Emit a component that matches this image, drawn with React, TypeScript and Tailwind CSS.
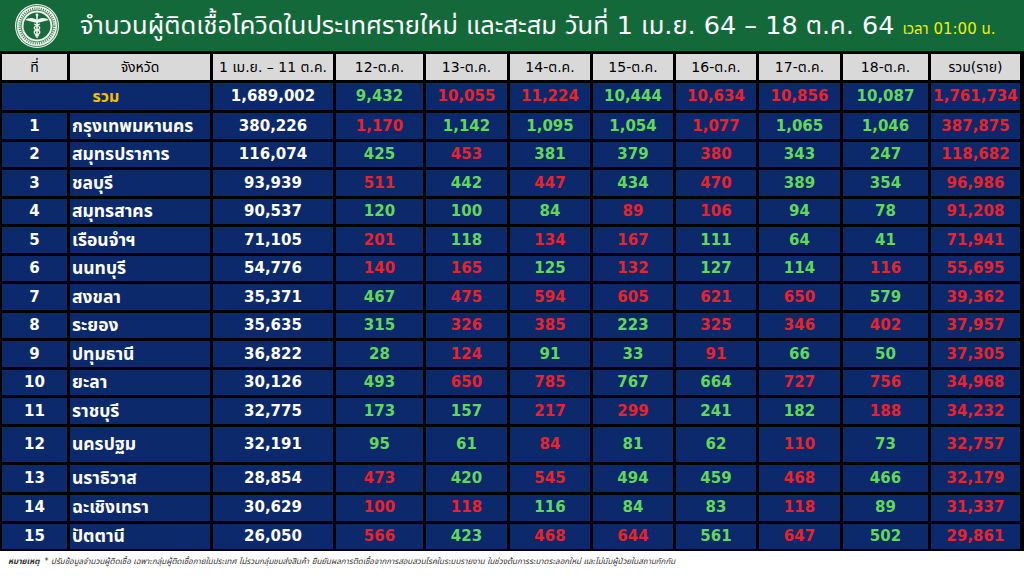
import React from 'react'

type Tone = 'g' | 'r'
type Row = {
  no: number
  name: string
  base: string
  days: [string, Tone][]
  total: string
}

const DATES = ['12-ต.ค.', '13-ต.ค.', '14-ต.ค.', '15-ต.ค.', '16-ต.ค.', '17-ต.ค.', '18-ต.ค.']

const d = (s: string): [string, Tone][] =>
  s.split(' ').map((p) => {
    const [v, t] = p.split(':')
    return [v, t as Tone]
  })

const SUM_DAYS = d('9,432:g 10,055:r 11,224:r 10,444:g 10,634:r 10,856:r 10,087:g')

const ROWS: Row[] = [
  { no: 1, name: 'กรุงเทพมหานคร', base: '380,226', days: d('1,170:r 1,142:g 1,095:g 1,054:g 1,077:r 1,065:g 1,046:g'), total: '387,875' },
  { no: 2, name: 'สมุทรปราการ', base: '116,074', days: d('425:g 453:r 381:g 379:g 380:r 343:g 247:g'), total: '118,682' },
  { no: 3, name: 'ชลบุรี', base: '93,939', days: d('511:r 442:g 447:r 434:g 470:r 389:g 354:g'), total: '96,986' },
  { no: 4, name: 'สมุทรสาคร', base: '90,537', days: d('120:g 100:g 84:g 89:r 106:r 94:g 78:g'), total: '91,208' },
  { no: 5, name: 'เรือนจำฯ', base: '71,105', days: d('201:r 118:g 134:r 167:r 111:g 64:g 41:g'), total: '71,941' },
  { no: 6, name: 'นนทบุรี', base: '54,776', days: d('140:r 165:r 125:g 132:r 127:g 114:g 116:r'), total: '55,695' },
  { no: 7, name: 'สงขลา', base: '35,371', days: d('467:g 475:r 594:r 605:r 621:r 650:r 579:g'), total: '39,362' },
  { no: 8, name: 'ระยอง', base: '35,635', days: d('315:g 326:r 385:r 223:g 325:r 346:r 402:r'), total: '37,957' },
  { no: 9, name: 'ปทุมธานี', base: '36,822', days: d('28:g 124:r 91:g 33:g 91:r 66:g 50:g'), total: '37,305' },
  { no: 10, name: 'ยะลา', base: '30,126', days: d('493:g 650:r 785:r 767:g 664:g 727:r 756:r'), total: '34,968' },
  { no: 11, name: 'ราชบุรี', base: '32,775', days: d('173:g 157:g 217:r 299:r 241:g 182:g 188:r'), total: '34,232' },
  { no: 12, name: 'นครปฐม', base: '32,191', days: d('95:g 61:g 84:r 81:g 62:g 110:r 73:g'), total: '32,757' },
  { no: 13, name: 'นราธิวาส', base: '28,854', days: d('473:r 420:g 545:r 494:g 459:g 468:r 466:g'), total: '32,179' },
  { no: 14, name: 'ฉะเชิงเทรา', base: '30,629', days: d('100:r 118:r 116:g 84:g 83:g 118:r 89:g'), total: '31,337' },
  { no: 15, name: 'ปัตตานี', base: '26,050', days: d('566:r 423:g 468:r 644:r 561:g 647:r 502:g'), total: '29,861' },
]

const tone = (t: Tone) => (t === 'g' ? 'text-[#62d85a]' : 'text-[#e8232b]')

function Logo() {
  return (
    <svg width="54" height="46" viewBox="0 0 54 46">
      <circle cx="27" cy="23" r="22" fill="#f2f2ee" />
      <circle cx="27" cy="23" r="20.5" fill="none" stroke="#1a6b3c" strokeWidth="0.8" />
      <circle cx="27" cy="23" r="16" fill="#f2f2ee" stroke="#1a6b3c" strokeWidth="0.8" />
      <circle cx="27" cy="23" r="17.5" fill="none" stroke="#3f8a5a" strokeWidth="2.2" strokeDasharray="1 1.2" />
      <circle cx="27" cy="23" r="13.5" fill="#1a6b3c" />
      {/* caduceus */}
      <path d="M27 12 V35" stroke="#f2f2ee" strokeWidth="1.6" />
      <circle cx="27" cy="12" r="1.4" fill="#f2f2ee" />
      <path d="M27 17 C22 14 18 15 15 17 C19 18 23 19 27 20 C31 19 35 18 39 17 C36 15 32 14 27 17 Z" fill="#f2f2ee" />
      <path d="M24 21 C31 23 31 26 27 27 C23 28 23 31 29 33" fill="none" stroke="#f2f2ee" strokeWidth="1.3" />
      <path d="M30 21 C23 23 23 26 27 27 C31 28 31 31 25 33" fill="none" stroke="#f2f2ee" strokeWidth="1.3" />
    </svg>
  )
}

export default function App() {
  const font = { fontFamily: 'Tahoma, "DejaVu Sans", "Noto Sans Thai", "Noto Sans", sans-serif' }
  const head = 'bg-[#d9d9d9] text-black text-[14px] flex items-center justify-center'
  const cell = 'bg-[#0c2a6b] flex items-center justify-center font-bold text-[15px]'

  return (
    <div className="w-[1024px] h-[576px] bg-white overflow-hidden" style={font}>
      {/* หัวเรื่อง */}
      <div className="h-[51px] bg-[#13693a] flex items-center pl-[10px]">
        <Logo />
        <h1 className="ml-[16px] text-white text-[25.5px] leading-none whitespace-nowrap">
          จำนวนผู้ติดเชื้อโควิดในประเทศรายใหม่ และสะสม วันที่ 1 เม.ย. 64 – 18 ต.ค. 64
        </h1>
        <span className="ml-[8px] mt-[7px] text-[#f0f000] text-[15px] whitespace-nowrap">เวลา 01:00 น.</span>
      </div>

      {/* ตาราง */}
      <div className="bg-black pt-[3px] pb-[2px] pl-[2px]">
        <div className="grid gap-[3px] grid-cols-[65px_140px_120px_87px_81px_80px_80px_80px_81px_85px_89px] grid-rows-[26px_27px_repeat(11,25.5px)_35px_27px_26px_25px]">
          <div className={head}>ที่</div>
          <div className={head}>จังหวัด</div>
          <div className={head}>1 เม.ย. – 11 ต.ค.</div>
          {DATES.map((x) => (
            <div key={x} className={head}>{x}</div>
          ))}
          <div className={head}>รวม(ราย)</div>

          <div className={`${cell} col-span-2 text-[#f5c000] text-[16px]`}>รวม</div>
          <div className={`${cell} text-white`}>1,689,002</div>
          {SUM_DAYS.map(([v, t], i) => (
            <div key={i} className={`${cell} ${tone(t)}`}>{v}</div>
          ))}
          <div className={`${cell} text-[#e8232b]`}>1,761,734</div>

          {ROWS.map((r) => (
            <React.Fragment key={r.no}>
              <div className={`${cell} text-white`}>{r.no}</div>
              <div className={`${cell} text-white justify-start! pl-[2px] text-[17.5px]!`}>{r.name}</div>
              <div className={`${cell} text-white`}>{r.base}</div>
              {r.days.map(([v, t], i) => (
                <div key={i} className={`${cell} ${tone(t)}`}>{v}</div>
              ))}
              <div className={`${cell} text-[#e8232b]`}>{r.total}</div>
            </React.Fragment>
          ))}
        </div>
      </div>

      {/* หมายเหตุ */}
      <div className="h-[22px] flex items-center pl-[8px] text-[8px] italic text-[#333] whitespace-nowrap">
        <span className="font-bold mr-[5px]">หมายเหตุ</span>
        <span>
          * ปรับข้อมูลจำนวนผู้ติดเชื้อ เฉพาะกลุ่มผู้ติดเชื้อภายในประเทศ ไม่รวมกลุ่มขนส่งสินค้า ยืนยันผลการติดเชื้อจากการสอบสวนโรคในระบบรายงาน ในช่วงต้นการระบาดระลอกใหม่ และไม่นับผู้ป่วยในสถานกักกัน
        </span>
      </div>
    </div>
  )
}
